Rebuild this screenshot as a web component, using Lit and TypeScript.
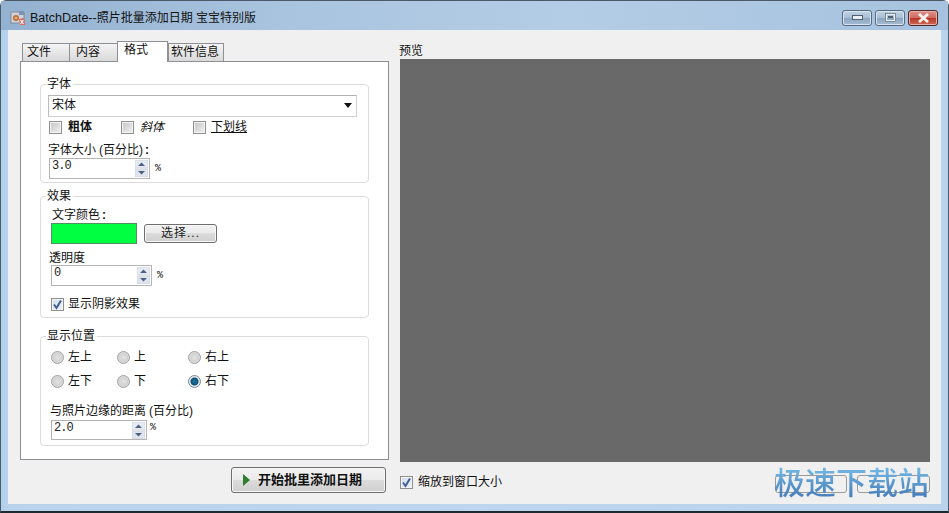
import { LitElement, html, css } from "lit";
import { customElement } from "lit/decorators.js";

const check = html`<svg viewBox="0 0 13 13" width="13" height="13"><path d="M3 6.5 L5.5 10 L10 2.5" fill="none" stroke="#3f5f96" stroke-width="2"/></svg>`;

@customElement("app-root")
export class AppRoot extends LitElement {
  static styles = css`
    :host { display: block; width: 949px; height: 513px; overflow: hidden; position: relative; background: #fff;
      font-family: "Liberation Sans", "Noto Sans CJK SC", sans-serif; font-size: 12px; color: #111; line-height: 14px; }
    .window { width: 949px; height: 513px; box-sizing: border-box; display: flex; flex-direction: column;
      background: linear-gradient(90deg, #b0d0ec 0, #b9d3ec 8px, #bdd5ee 50%, #b9d3ec 100%);
      border: 1px solid #4a5a68; border-bottom: 2px solid #1e2a30; border-radius: 6px 6px 0 0; }
    .titlebar { height: 29px; display: flex; align-items: center; padding: 4px 10px 0 9px; box-sizing: border-box; flex: none;
      background: linear-gradient(90deg, #93b1d0 0, #a9c4df 30%, #b4cde6 60%, #a6c2de 100%); }
    .title { margin-left: 4px; font-size: 12px; color: #111; flex: 1; }
    .latin { font-size: 12.5px; }
    .appicon { flex: none; }
    .wbtn { width: 30px; height: 16px; box-sizing: border-box; margin-left: 3px; border: 1px solid #56697e; border-radius: 3px;
      background: linear-gradient(#c0d3e6 0, #a9bfd5 48%, #8ba5bf 50%, #a5bdd3 100%); display: flex; align-items: center; justify-content: center; box-shadow: inset 0 0 0 1px #d8e5f1; }
    .wbtn.close { background: linear-gradient(#e0908a 0, #cf6c62 48%, #b93525 50%, #cf6a58 100%); border-color: #4d2a28; box-shadow: inset 0 0 0 1px #e8b0a8; }
    .client { flex: 1; margin: 0 7px 7px; background: #f0f0f0; display: flex; padding: 12px 11px 0 12px; box-sizing: border-box; min-height: 0; }
    .left { width: 369px; flex: none; display: flex; flex-direction: column; }
    .tabs { display: flex; height: 20px; padding-left: 2px; align-items: flex-end; position: relative; z-index: 1; margin-bottom: -1px; }
    .tab { height: 19px; box-sizing: border-box; border: 1px solid #8e9095; margin-right: -1px;
      background: linear-gradient(#f4f4f4, #d9d9d9); font-size: 12px; line-height: 17px; }
    .tab.w1 { width: 48px; padding-left: 4px; } .tab.w2 { width: 49px; padding-left: 6px; } .tab.w4 { width: 56px; margin-left: 1px; padding-left: 2px; }
    .tab.active { height: 21px; width: 51px; background: #fff; border-bottom: 0; padding-left: 6px; }
    .panel { height: 399px; box-sizing: border-box; background: #fff; border: 1px solid #898c91; padding: 22px 19px 0; display: flex; flex-direction: column; }
    .group { border: 1px solid #dcdcdc; border-radius: 4px; box-sizing: border-box; padding: 0 0 0 8px; display: flex; flex-direction: column; flex: none; }
    .g1 { height: 99px; } .g2 { height: 122px; margin-top: 13px; } .g3 { height: 110px; margin-top: 18px; }
    .legend { align-self: flex-start; margin: -8px 0 0 -3px; padding: 0 2px 0 1px; background: #fff; font-size: 12px; height: 14px; }
    .select { width: 309px; height: 22px; box-sizing: border-box; margin-top: 4px; margin-left: -1px; border: 1px solid #d0d0d0; border-top-color: #b4b4b4; border-left-color: #bcbcbc;
      display: flex; align-items: center; justify-content: space-between; padding: 0 4px 2px 3px; font-size: 12px; }
    .row { display: flex; align-items: center; }
    .checks { height: 14px; margin-top: 3px; }
    .cb { width: 13px; height: 13px; box-sizing: border-box; flex: none; border: 1px solid #8e8f8f; box-shadow: inset 0 0 0 1px #f4f4f4; background: linear-gradient(135deg, #c4c4c4, #f2f2f2); }
    .cb.on { background: linear-gradient(135deg, #d6dcec, #eef1f8); position: relative; }
    .cb svg { position: absolute; left: -1px; top: -1px; }
    .cl { margin-left: 6px; white-space: nowrap; font-size: 12px; }
    .c1 { width: 72px; } .c1 b { font-weight: 700; margin-left: 6px; font-size: 12px; }
    .c2 { width: 72px; } .c2 .cl { font-style: italic; margin-left: 6px; }
    .c3 .cl { text-decoration: underline; margin-left: 5px; }
    .lbl { font-size: 12px; height: 14px; white-space: nowrap; }
    .paren { margin-left: 3px; }
    .colon { margin-left: 2px; font-weight: 700; }
    .l1 { margin-top: 9px; margin-left: -1px; }
    .spinrow { margin-top: 1px; display: flex; align-items: center; }
    .spin { box-sizing: border-box; height: 21px; border: 1px solid #b4b4b4; display: flex; justify-content: space-between; padding: 0 1px 0 2px; font-family: "Liberation Mono", monospace; font-size: 12px; letter-spacing: -1px; line-height: 15px; color: #222; background: #fff; }
    .s101 { width: 101px; } .s96 { width: 96px; }
    .arrows { width: 13px; height: 17px; margin-top: 1px; display: block; flex: none; }
    .pct { font-family: "Liberation Mono", monospace; font-size: 10px; margin-left: 5px; margin-top: 1px; }
    .g2 .l2 { margin: 5px 0 0 3px; }
    .colors { margin-top: 1px; margin-left: 2px; }
    .swatch { width: 86px; height: 21px; background: #00ff40; border: 1px solid #4f8f60; box-sizing: border-box; }
    .sel { width: 73px; height: 19px; margin-left: 7px; box-sizing: border-box; border: 1px solid #6f6f6f; border-radius: 3px; text-align: center; font-size: 12px; line-height: 17px; background: linear-gradient(#f2f2f2 0, #ebebeb 48%, #dcdcdc 50%, #cfcfcf 100%); box-shadow: inset 0 0 0 1px #f7f7f7; color: #222; letter-spacing: 1px; }
    .l3 { margin-top: 7px; }
    .sr2 { margin-left: 2px; margin-top: 0; }
    .shadow { margin: 11px 0 0 2px; height: 14px; }
    .shadow .cl { margin-left: 4px; }
    .rads { margin-left: 2px; height: 14px; }
    .rads.r1 { margin-top: 7px; } .rads.r2 { margin-top: 10px; }
    .rad { width: 13px; height: 13px; border-radius: 50%; box-sizing: border-box; border: 1px solid #a0a0a0; background: radial-gradient(circle, #e2e2e2 0, #d2d2d2 55%, #f4f4f4 100%); flex: none; }
    .rad.on { border-color: #7a8a98; background: radial-gradient(circle, #1f7aa6 0, #0e4f74 45%, #e8e8e8 58%, #e4e4e4 100%); }
    .rl { margin-left: 4px; font-size: 12px; }
    .rc1 { width: 66px; } .rc2 { width: 71px; }
    .l4 { margin: 16px 0 0 1px; font-size: 12px; }
    .g3 .spinrow { margin: 2px 0 0 2px; }
    .g3 .pct { margin-left: 3px; margin-top: -4px; }
    .g3 .spin { height: 20px; }
    .btnrow { display: flex; justify-content: flex-end; padding: 7px 3px 0 0; }
    .go { width: 155px; height: 26px; box-sizing: border-box; border: 1px solid #6f6f6f; border-radius: 3px; background: linear-gradient(#f2f2f2 0, #ebebeb 48%, #dcdcdc 50%, #cfcfcf 100%); box-shadow: inset 0 0 0 1px #f7f7f7;
      display: flex; align-items: center; padding-left: 11px; gap: 8px; font-weight: 700; font-size: 13px; color: #111; }
    .right { flex: 1; margin-left: 11px; display: flex; flex-direction: column; min-width: 0; }
    .pv { height: 17px; line-height: 19px; font-size: 12px; margin-left: -1px; }
    .canvas { height: 403px; background: #696969; }
    .bottom { display: flex; align-items: center; padding-top: 13px; height: 14px; position: relative; }
    .bottom .cl { margin-left: 5px; }
    .ghost { position: absolute; top: 13px; height: 18px; border: 1px solid #9a9a9a; border-radius: 3px; box-sizing: border-box; }
    .gh1 { left: 375px; width: 72px; } .gh2 { left: 457px; width: 73px; }
    .wm { position: absolute; left: 774px; top: 462px; font-size: 31px; line-height: 38px; white-space: nowrap; font-family: "Noto Sans CJK SC", sans-serif; font-weight: 500;
      background: linear-gradient(#74b8e4 15%, #4a82bd 85%); -webkit-background-clip: text; background-clip: text; color: transparent; }
  `;

  private spin(v: string, cls: string) {
    return html`<div class="spin ${cls}"><span>${v}</span>
      <svg class="arrows" viewBox="0 0 13 17"><rect x="0" y="0" width="13" height="8" fill="#e6eaf2" stroke="#c6cbd6" stroke-width=".6"/><rect x="0" y="9" width="13" height="8" fill="#dfe4ee" stroke="#c6cbd6" stroke-width=".6"/><path d="M6.5 2.5 L10 6 H3Z" fill="#4d6185"/><path d="M3 11 H10 L6.5 14.5Z" fill="#4d6185"/></svg></div>`;
  }

  render() {
    return html`<div class="window">
      <div class="titlebar">
        <svg class="appicon" width="16" height="16" viewBox="0 0 16 16"><rect x="1" y="2" width="13" height="11" fill="#cfd2da" stroke="#7c7f88" stroke-width=".8"/><rect x="9" y="1" width="5" height="4" fill="#7f93b0"/><circle cx="6" cy="8" r="3" fill="#c0703a"/><circle cx="6" cy="8" r="1.3" fill="#e8b070"/><path d="M9 9 L14 8 L15 15 L10 15Z" fill="#d9695c"/><path d="M10.5 10 L13.5 14 M13.5 10 L10.5 14" stroke="#fff" stroke-width="1.2"/></svg>
        <span class="title"><span class="latin">BatchDate--</span>照片批量添加日期 宝宝特别版</span>
        <div class="wbtn"><svg width="11" height="5" viewBox="0 0 11 5"><rect x=".5" y=".5" width="10" height="4" fill="#e8eef4" stroke="#50606e"/></svg></div>
        <div class="wbtn"><svg width="11" height="9" viewBox="0 0 11 9"><rect x="1" y="1" width="9" height="7" fill="none" stroke="#e8eef4" stroke-width="2"/><rect x="0.5" y=".5" width="10" height="8" fill="none" stroke="#50606e" stroke-width=".7"/><rect x="3" y="3" width="5" height="2" fill="#50606e"/></svg></div>
        <div class="wbtn close"><svg width="13" height="10" viewBox="0 0 13 10"><path d="M2 1 L11 9 M11 1 L2 9" stroke="#f6f0ee" stroke-width="2.8"/></svg></div>
      </div>
      <div class="client">
        <div class="left">
          <div class="tabs">
            <div class="tab w1">文件</div><div class="tab w2">内容</div><div class="tab active">格式</div><div class="tab w4">软件信息</div>
          </div>
          <div class="panel">
            <div class="group g1">
              <div class="legend">字体</div>
              <div class="select"><span>宋体</span><svg width="8" height="5" viewBox="0 0 8 5"><path d="M0 0H8L4 5Z" fill="#111"/></svg></div>
              <div class="row checks">
                <div class="row c1"><div class="cb"></div><b>粗体</b></div>
                <div class="row c2"><div class="cb"></div><span class="cl">斜体</span></div>
                <div class="row c3"><div class="cb"></div><span class="cl">下划线</span></div>
              </div>
              <div class="lbl l1">字体大小<span class="paren">(</span>百分比)<span class="colon">:</span></div>
              <div class="spinrow">${this.spin("3.0", "s101")}<span class="pct">%</span></div>
            </div>
            <div class="group g2">
              <div class="legend">效果</div>
              <div class="lbl l2">文字颜色<span class="colon">:</span></div>
              <div class="row colors"><div class="swatch"></div><div class="sel">选择...</div></div>
              <div class="lbl l3">透明度</div>
              <div class="spinrow sr2">${this.spin("0", "s101")}<span class="pct">%</span></div>
              <div class="row shadow"><div class="cb on">${check}</div><span class="cl">显示阴影效果</span></div>
            </div>
            <div class="group g3">
              <div class="legend">显示位置</div>
              <div class="row rads r1">
                <div class="row rc1"><div class="rad"></div><span class="rl">左上</span></div>
                <div class="row rc2"><div class="rad"></div><span class="rl">上</span></div>
                <div class="row"><div class="rad"></div><span class="rl">右上</span></div>
              </div>
              <div class="row rads r2">
                <div class="row rc1"><div class="rad"></div><span class="rl">左下</span></div>
                <div class="row rc2"><div class="rad"></div><span class="rl">下</span></div>
                <div class="row"><div class="rad on"></div><span class="rl">右下</span></div>
              </div>
              <div class="lbl l4">与照片边缘的距离<span class="paren">(</span>百分比)</div>
              <div class="spinrow">${this.spin("2.0", "s96")}<span class="pct">%</span></div>
            </div>
          </div>
          <div class="btnrow"><div class="go"><svg width="7" height="12" viewBox="0 0 7 12"><path d="M0 0 L7 6 L0 12Z" fill="#2f7d2f"/></svg><span>开始批里添加日期</span></div></div>
        </div>
        <div class="right">
          <div class="pv">预览</div>
          <div class="canvas"></div>
          <div class="bottom"><div class="cb on">${check}</div><span class="cl">缩放到窗口大小</span>
            <div class="ghost gh1"></div><div class="ghost gh2"></div></div>
        </div>
      </div>
    </div>
    <div class="wm">极速下载站</div>`;
  }
}
